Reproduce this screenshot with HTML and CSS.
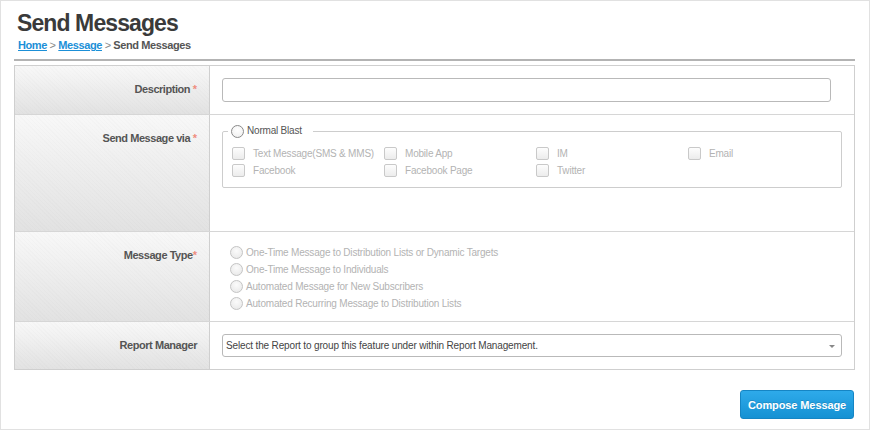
FILE: index.html
```html
<!DOCTYPE html>
<html>
<head>
<meta charset="utf-8">
<title>Send Messages</title>
<link rel="stylesheet" href="styles.css">
</head>
<body>
<div class="page">
  <h1 class="title">Send Messages</h1>
  <div class="crumbs"><a href="#">Home</a><span class="sep"> &gt; </span><a href="#">Message</a><span class="sep"> &gt; </span><span class="here">Send Messages</span></div>
  <div class="rule"></div>
  <div class="form">
    <div class="row row-desc">
      <div class="label">Description <span class="req">*</span></div>
      <div class="value">
        <div class="textbox"></div>
      </div>
    </div>
    <div class="row row-via">
      <div class="label">Send Message via <span class="req">*</span></div>
      <div class="value">
        <fieldset class="group">
          <legend class="legend"><span class="radio on"></span><span class="legend-text">Normal Blast</span></legend>
          <div class="checks">
            <div class="check"><span class="box"></span>Text Message(SMS &amp; MMS)</div>
            <div class="check"><span class="box"></span>Mobile App</div>
            <div class="check"><span class="box"></span>IM</div>
            <div class="check"><span class="box"></span>Email</div>
            <div class="check"><span class="box"></span>Facebook</div>
            <div class="check"><span class="box"></span>Facebook Page</div>
            <div class="check"><span class="box"></span>Twitter</div>
          </div>
        </fieldset>
      </div>
    </div>
    <div class="row row-type">
      <div class="label">Message Type<span class="req">*</span></div>
      <div class="value">
        <div class="opt"><span class="radio"></span>One-Time Message to Distribution Lists or Dynamic Targets</div>
        <div class="opt"><span class="radio"></span>One-Time Message to Individuals</div>
        <div class="opt"><span class="radio"></span>Automated Message for New Subscribers</div>
        <div class="opt"><span class="radio"></span>Automated Recurring Message to Distribution Lists</div>
      </div>
    </div>
    <div class="row row-report">
      <div class="label">Report Manager</div>
      <div class="value">
        <div class="select"><span class="select-text">Select the Report to group this feature under within Report Management.</span><span class="arrow"></span></div>
      </div>
    </div>
  </div>
  <div class="actions">
    <button class="btn">Compose Message</button>
  </div>
</div>
</body>
</html>
```

FILE: styles.css
```css
* { box-sizing: border-box; }
html, body { margin: 0; padding: 0; background: #fff; }
body {
  font-family: "Liberation Sans", Arial, sans-serif;
  color: #555;
}
.page {
  width: 870px;
  height: 430px;
  border: 1px solid #e1e1e1;
  padding: 7px 14px 0 13px;
}
.title {
  margin: 0 0 0 3px;
  font-size: 23px;
  line-height: 30px;
  font-weight: bold;
  letter-spacing: -0.9px;
  color: #3a3a3a;
}
.crumbs {
  margin-left: 4px;
  font-size: 11px;
  line-height: 14px;
  font-weight: bold;
  letter-spacing: -0.4px;
  color: #555;
}
.crumbs a { color: #1b8fd7; text-decoration: underline; }
.crumbs .sep { color: #888; font-weight: normal; }
.rule {
  margin-top: 7px;
  height: 2px;
  background: #b3b3b3;
}
.form {
  margin-top: 4px;
  border: 1px solid #cfcfcf;
}
.row {
  display: grid;
  grid-template-columns: 195px 1fr;
  border-top: 1px solid #d6d6d6;
}
.row:first-child { border-top: 0; }
.label {
  border-right: 1px solid #cfcfcf;
  background:
    repeating-linear-gradient(45deg, rgba(0,0,0,0.012) 0 1px, rgba(255,255,255,0) 1px 3px),
    linear-gradient(#f8f8f8, #e2e2e2);
  text-align: right;
  padding: 16px 12px 0 0;
  font-size: 11px;
  line-height: 14px;
  font-weight: bold;
  letter-spacing: -0.45px;
  color: #555;
}
.req { color: #ef8e7f; letter-spacing: 0; }
.value { padding: 12px; }
.textbox {
  width: 609px;
  height: 24px;
  border: 1px solid #b9b9b9;
  border-radius: 3px;
  background: #fff;
}
.row-via .value { padding: 9px 12px 43px 12px; }
.group {
  margin: 0;
  border: 1px solid #cdcdcd;
  border-radius: 2px;
  padding: 7px 9px 8px 9px;
  min-width: 0;
}
.legend {
  margin-left: -4px;
  padding: 0 11px 0 3px;
  display: flex;
  align-items: center;
  font-size: 10px;
  line-height: 14px;
  letter-spacing: -0.2px;
  color: #555;
}
.legend .radio { margin-right: 3px; }
.checks {
  display: grid;
  grid-template-columns: 152px 152px 152px 1fr;
}
.check {
  display: flex;
  align-items: center;
  height: 17px;
  font-size: 10px;
  letter-spacing: -0.2px;
  white-space: nowrap;
  color: #b3b3b3;
}
.box {
  width: 13px;
  height: 13px;
  margin-right: 8px;
  border: 1px solid #c9c9c9;
  border-radius: 2px;
  background: linear-gradient(#fdfdfd, #ececec);
  flex: none;
}
.radio {
  width: 13px;
  height: 13px;
  border-radius: 50%;
  border: 1px solid #c4c4c4;
  background: radial-gradient(circle at 50% 35%, #fbfbfb, #e6e6e6);
  flex: none;
}
.radio.on {
  border-color: #8a8a8a;
  background: radial-gradient(circle at 50% 35%, #ffffff, #ededed);
}
.row-type .value { padding: 12px 12px 9px 20px; }
.opt {
  display: flex;
  align-items: center;
  height: 17px;
  font-size: 10px;
  letter-spacing: -0.2px;
  white-space: nowrap;
  color: #b3b3b3;
}
.opt .radio { margin-right: 3px; }
.select {
  position: relative;
  height: 23px;
  border: 1px solid #b9b9b9;
  border-radius: 3px;
  background: #fff;
  display: flex;
  align-items: center;
  padding-left: 3px;
  font-size: 10px;
  letter-spacing: -0.15px;
  white-space: nowrap;
  color: #444;
}
.arrow {
  position: absolute;
  right: 6px;
  top: 10px;
  width: 0;
  height: 0;
  border-left: 3px solid transparent;
  border-right: 3px solid transparent;
  border-top: 3px solid #888;
}
.actions {
  display: flex;
  justify-content: flex-end;
  margin-top: 20px;
  padding-right: 1px;
}
.btn {
  width: 114px;
  height: 29px;
  border: 1px solid #1585c4;
  border-radius: 3px;
  background: linear-gradient(#2eaaea, #1591d3);
  color: #fff;
  font-family: "Liberation Sans", Arial, sans-serif;
  font-size: 11px;
  font-weight: bold;
  letter-spacing: -0.1px;
  text-shadow: 0 -1px 0 rgba(0,0,0,0.15);
  padding: 0;
  cursor: pointer;
}
```
